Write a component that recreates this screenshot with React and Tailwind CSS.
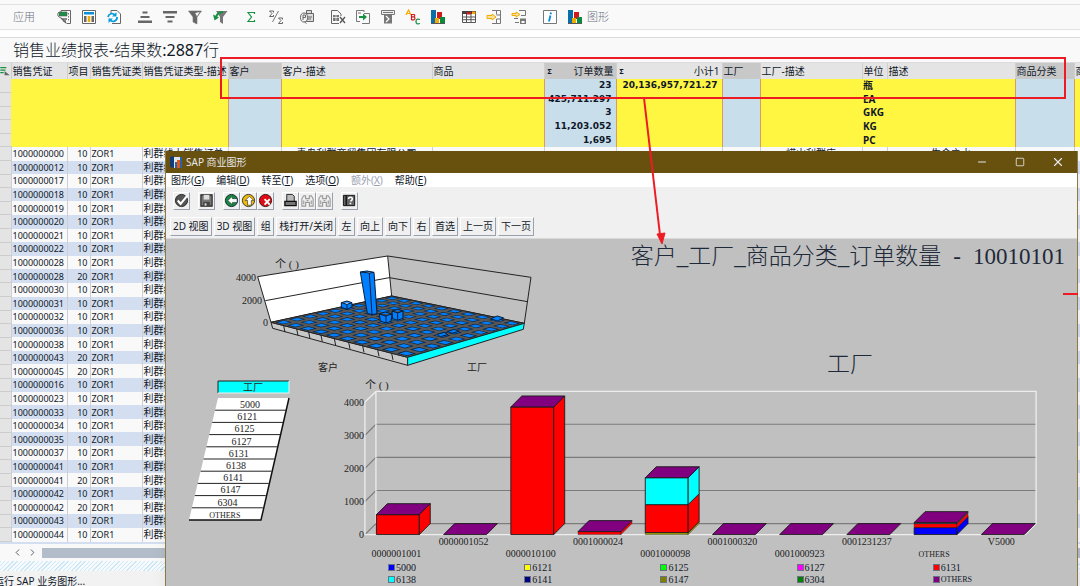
import { Minus, Square, X, ChevronLeft, ChevronRight } from 'lucide-react'

const SANS = "font-['Noto_Sans','Noto_Sans_CJK_SC',sans-serif]"
const SERIF = "font-['Liberation_Serif','Noto_Sans_CJK_SC',serif]"

const COLUMNS = [
  { label: '销售凭证', width: 56 },
  { label: '项目', width: 23 },
  { label: '销售凭证类', width: 52 },
  { label: '销售凭证类型-描述', width: 86 },
  { label: '客户', width: 53, marked: true },
  { label: '客户-描述', width: 151 },
  { label: '商品', width: 112 },
  { label: '订单数量', width: 72, marked: true, sum: true },
  { label: '小计1', width: 106, sum: true },
  { label: '工厂', width: 38, marked: true },
  { label: '工厂-描述', width: 102 },
  { label: '单位', width: 25 },
  { label: '描述', width: 128 },
  { label: '商品分类', width: 59, marked: true },
  { label: '商品分类描述' },
]

const TOTALS = [
  ['23', '20,136,957,721.27', '瓶'],
  ['425,711.297', '', 'EA'],
  ['3', '', 'GKG'],
  ['11,203.052', '', 'KG'],
  ['1,695', '', 'PC'],
]

const ROWS = [
  ['1000000000', 10], ['1000000012', 10], ['1000000017', 10], ['1000000018', 10],
  ['1000000019', 10], ['1000000020', 10], ['1000000021', 10], ['1000000022', 10],
  ['1000000028', 10], ['1000000028', 20], ['1000000030', 10], ['1000000031', 10],
  ['1000000032', 10], ['1000000036', 10], ['1000000038', 10], ['1000000043', 20],
  ['1000000045', 20], ['1000000016', 10], ['1000000023', 10], ['1000000033', 10],
  ['1000000034', 10], ['1000000035', 10], ['1000000037', 10], ['1000000041', 10],
  ['1000000041', 20], ['1000000042', 10], ['1000000042', 20], ['1000000043', 10],
  ['1000000044', 10],
]

// Descriptions of the first document, by column label
const FIRST_ROW = {
  '客户-描述': '青岛利群商贸集团有限公司',
  '工厂-描述': '崂山利群店',
  '描述': '生命之水',
}

const BarsIcon = (
  <>
    <path d="M1 1h5v14H1z" fill="#0a6ea8" />
    <path d="M7 3h5v7H7z" fill="#cf1b1b" />
    <path d="M5 9h4v6H5z" fill="#f0ab00" />
    <path d="M10 8h5v7h-5z" fill="#0a8a3c" />
    <path d="M1 14.5h14" stroke="#555" />
  </>
)

const TOOL_GROUPS = [
  [
    ['明细', <>
      <path d="M5 1.500h9.500v13h-4M5 1.500v2" stroke="#666" fill="none" />
      <path d="M3 3h8v4H3z" fill="#179244" stroke="#555" strokeWidth=".6" />
      <path d="M6 10h5M7 12h3M5 9l5 5" stroke="#666" strokeWidth="1.300" />
      <path d="M3 3a3 3 0 0 0 0 5l2 1" fill="none" stroke="#777" />
      <path d="M12.500 4v1.500M12.500 7v1.500M12.500 10v1.500" stroke="#777" />
    </>],
    ['选择布局', <>
      <path d="M1.500 1.500h13v13h-13z" fill="#fff" stroke="#666" />
      <path d="M3 3h10v2.500H3z" fill="#0a8fd6" />
      <path d="M3 7h2.500v6H3zM10.500 7H13v6h-2.500z" fill="#666" />
      <path d="M6.700 7h2.600v6H6.700z" fill="#f0ab00" />
    </>],
    ['刷新', <>
      <path d="M5 5V1.500h6l3.500 3.500v9.500H6" stroke="#666" fill="#fff" />
      <path d="M2 8a4 4 0 0 1 7-2M11 8a4 4 0 0 1-7 3" stroke="#0a9be0" strokeWidth="1.800" fill="none" />
      <path d="M10.500 3v4.500H6zM2.500 14V9.500H7z" fill="#0a9be0" />
    </>],
  ],
  [
    ['升序', <path d="M5.500 2.500h5v2h-5zM3.500 7h9v2h-9zM1 11.500h14v2.500H1z" fill="#666" />],
    ['降序', <path d="M1 2h14v2.500H1zM3.500 7h9v2h-9zM5.500 11.500h5v2h-5z" fill="#666" />],
    ['过滤', <path d="M1.500 2h13L10 8v7l-4-2V8zM8 4l2 4 3-5" fill="#666" stroke="#777" strokeWidth=".6" />],
    ['删除过滤', <>
      <path d="M4 2h11.500L11 8v7l-3-2V8z" fill="#777" />
      <path d="M11 3C8 3 5 5 4 8" stroke="#179244" strokeWidth="2.200" fill="none" />
      <path d="M1 5.500l1.500 6L7 8.500z" fill="#179244" />
    </>],
  ],
  [
    ['总计', <path d="M11.500 5V3.500H5l3.500 4.500L5 12.500h6.500V11" stroke="#179244" strokeWidth="1.200" fill="none" />],
    ['小计', <>
      <path d="M5.500 3.500V2h-4L4 4.500 1.500 7.500h4V6M14.500 10.500V9h-4l2.500 2.500-2.500 3h4V13" stroke="#666" fill="none" />
      <path d="M10.500 2L4.500 13" stroke="#777" />
    </>],
  ],
  [
    ['打印预览', <>
      <path d="M7.500 4V1.500h5V4M5.500 4.500h9v8h-9z" stroke="#666" fill="#ddd" />
      <path d="M7 8h6M8 10h4" stroke="#666" />
      <ellipse cx="5" cy="8.500" rx="3.500" ry="4.500" fill="#f5f5f5" stroke="#666" />
      <path d="M4 6v5M4 6h2.500v2.500H4M5.500 13l2 1.500" stroke="#666" fill="none" />
    </>],
  ],
  [
    ['电子表格', <>
      <path d="M9 14.500H1.500v-13h6L11 5v2" stroke="#666" fill="none" />
      <path d="M3 6h6v6H3z" fill="#777" />
      <path d="M3 8.500h6M6 6v6" stroke="#fff" strokeWidth=".7" />
      <path d="M10 8l5 6M15 8l-5 6" stroke="#555" strokeWidth="1.300" />
    </>],
    ['导出', <>
      <path d="M9 3V1.500H1.500v11H5M9 4.500h5.500v10H9M7 14.500h2" stroke="#777" fill="none" />
      <path d="M3 4h3" stroke="#777" />
      <path d="M4 7h4V4.500L12 8l-4 3.500V9H4z" fill="#179244" />
    </>],
    ['本地文件', <>
      <path d="M1.500 1.500h13v4h-13z" stroke="#777" fill="#eee" />
      <path d="M3 3.500h10" stroke="#777" />
      <path d="M4 5h8v9.500H4z" fill="#777" />
      <path d="M6 7l3 3-3 3" stroke="#fff" fill="none" strokeWidth="1.200" />
    </>],
    ['ABC 分析', <>
      <path d="M1 6l2.500-5L6 6M2 4.500h3" stroke="#f0ab00" fill="none" strokeWidth="1.200" />
      <path d="M6.500 5v6M6.500 5.500H9q1.500 1.200 0 2.300H7M9 7.800q2 1.600 0 3H6.500" stroke="#cf1b1b" fill="none" strokeWidth="1.200" />
      <path d="M15 10.500q-4-1.500-4 2t4 2" stroke="#179244" fill="none" strokeWidth="1.300" />
    </>],
    ['图形', BarsIcon],
  ],
  [
    ['更改布局', <>
      <path d="M1.500 2.500h13v11h-13z" fill="#fff" stroke="#555" />
      <path d="M1 2h14v3H1z" fill="#444" />
      <path d="M6 3h4v2.500H6z" fill="#cf1b1b" />
      <path d="M11 2.500h3.500V5H11z" fill="#f0ab00" />
      <path d="M1.500 8h13M1.500 10.700h13M5.500 5v8.500M10 5v8.500" stroke="#555" />
    </>],
    ['展开', <>
      <path d="M6 1.500h8.500v13H6M10.500 1.500v4M10.500 10v4.500M10.500 6h4M10.500 10h4" stroke="#777" fill="none" />
      <path d="M1 6.500h5V5l4 3-4 3V9.500H1z" fill="#fde3a0" stroke="#f0ab00" />
    </>],
    ['保存布局', <>
      <path d="M8 1.500h6.500v5H10M3 9.500h4M4 13.500h4" stroke="#777" fill="none" />
      <path d="M1 4.500h4V3l4 2.500L5 8V6.500H1z" fill="#fde3a0" stroke="#f0ab00" />
      <path d="M9 9.500h6v5.500H9z" fill="#777" />
      <path d="M10.500 12h3v2h-3z" fill="#fff" />
    </>],
  ],
  [
    ['信息', <>
      <path d="M1.500 1.500h13v13h-13z" fill="#fff" stroke="#777" />
      <path d="M9 3.500l-.4 1.800M8.400 6.500L7 12.500" stroke="#0a8fd6" strokeWidth="1.900" />
    </>],
  ],
]

const MENUS = [
  ['图形', 'G'], ['编辑', 'D'], ['转至', 'T'], ['选项', 'O'], ['额外', 'X', true], ['帮助', 'E'],
]

const Finder = (
  <path d="M2 14V6l2-3h2v3h4V3h2l2 3v8h-4v-4H6v4zM4 8v4M12 8v4M7 8h2" fill="none" stroke="#999" strokeWidth="1.200" />
)

const CHART_TOOLS = [
  [['确认', <>
    <circle cx="8" cy="8" r="6.500" fill="#555" stroke="#222" />
    <path d="M4 8l3 3.500L14 3" fill="none" stroke="#fff" strokeWidth="2.200" />
  </>]],
  [['保存', <>
    <path d="M2 2h12v12H2z" fill="#777" stroke="#222" strokeWidth="1.200" />
    <path d="M5 2h6v5H5z" fill="#ddd" />
    <path d="M4.500 9.500h7V14h-7z" fill="#444" />
    <path d="M6 11h2v2.500H6z" fill="#ddd" />
  </>]],
  [
    ['返回', <>
      <circle cx="8" cy="8" r="6.500" fill="#16893b" stroke="#123" />
      <path d="M4 8l5-4.500V6h5v4H9v2.500z" fill="#fff" stroke="#123" strokeWidth=".6" />
    </>],
    ['退出', <>
      <circle cx="8" cy="8" r="6.500" fill="#f2b90c" stroke="#332" />
      <path d="M9 3.500l4.500 4.500H11v5H7V8H4.500z" fill="#fff" stroke="#332" strokeWidth=".7" />
    </>],
    ['取消', <>
      <circle cx="8" cy="8" r="6.500" fill="#e00b14" stroke="#311" />
      <path d="M7 6.500l5.500 6M12.500 6.500l-5.500 6" stroke="#fff" strokeWidth="2" />
    </>],
  ],
  [
    ['打印', <>
      <path d="M4 1.500h6l2 2V9H4z" fill="#bbb" stroke="#222" />
      <path d="M2 9h12v4.500H2z" fill="#777" stroke="#111" strokeWidth="1.400" />
    </>],
    ['查找', Finder],
    ['查找下一个', Finder],
  ],
  [['帮助', <>
    <path d="M1.500 2.500h3v11h-3zM4.500 2.500h9v11h-9z" fill="#666" stroke="#111" />
    <path d="M7 6.500q0-2 2-2t2 2q0 1-2 2.500M9 10.500v1.500" fill="none" stroke="#fff" strokeWidth="1.700" />
  </>]],
]

const VIEW_BUTTONS = [
  '2D 视图', '3D 视图', '组', '栈打开/关闭', '左', '向上', '向下', '右', '首选', '上一页', '下一页',
]

const PLANTS = ['5000', '6121', '6125', '6127', '6131', '6138', '6141', '6147', '6304', 'OTHERS']

const LEGEND = [
  ['5000', '#0000ff'], ['6121', '#ffff00'], ['6125', '#00ff00'], ['6127', '#ff00ff'], ['6131', '#ff0000'],
  ['6138', '#00ffff'], ['6141', '#000080'], ['6147', '#808000'], ['6304', '#008000'], ['OTHERS', '#800080'],
]

// Stacked segments: [height, colour], drawn from the base up
const CUSTOMERS = [
  { name: '0000001001', stack: [[20, '#ff0000']] },
  { name: '0000001052', stack: [] },
  { name: '0000010100', stack: [[128, '#ff0000']] },
  { name: '0001000024', stack: [[3, '#ff0000']] },
  { name: '0001000098', stack: [[2, '#a0a000'], [28, '#ff0000'], [27, '#00ffff']] },
  { name: '0001000320', stack: [] },
  { name: '0001000923', stack: [] },
  { name: '0001231237', stack: [] },
  { name: 'OTHERS', stack: [[7, '#0000ff'], [4, '#ff0000'], [1, '#008080']] },
  { name: 'V5000', stack: [] },
]

function Glyph({ children, className = 'size-4' }) {
  return <svg viewBox="0 0 16 16" className={className} aria-hidden="true">{children}</svg>
}

function ReportToolbar() {
  return (
    <div className="flex h-[26px] items-center gap-[15px] border-y border-[#e2e2e2] bg-[#f9f9f9] pl-[13px] text-[11px] font-light text-gray-500">
      <button className="mr-1.5 whitespace-nowrap">应用</button>
      {TOOL_GROUPS.map((group, i) => (
        <div key={i} className="flex gap-[9px]">
          {group.map(([label, art]) => (
            <button key={label} aria-label={label}><Glyph>{art}</Glyph></button>
          ))}
          {i === TOOL_GROUPS.length - 1 && (
            <button className="flex items-center gap-1 whitespace-nowrap"><Glyph>{BarsIcon}</Glyph>图形</button>
          )}
        </div>
      ))}
    </div>
  )
}

function ReportTable() {
  return (
    <table className="h-[479px] w-full table-fixed border-collapse text-[9px] leading-[13px] text-gray-900">
      <colgroup>
        <col className="w-[11px]" />
        {COLUMNS.map((c) => <col key={c.label} style={{ width: c.width }} />)}
      </colgroup>
      <thead>
        <tr className="h-4 text-[10px]">
          <th className="bg-[#e4e4e4] p-0">
            <svg viewBox="0 0 11 14" className="h-3 w-2.5" aria-label="全选">
              <path d="M0 3h7M0 6h6M0 9h4" stroke="#179244" strokeWidth="1.500" />
              <path d="M5 7l6 5H5z" fill="#666" />
            </svg>
          </th>
          {COLUMNS.map((c) => (
            <th
              key={c.label}
              className={`overflow-hidden border-l border-[#cfcfcf] py-0 pr-0.5 pl-px font-normal whitespace-nowrap ${c.marked ? 'bg-[#c8c8c8]' : 'bg-[#e4e4e4]'}`}
            >
              <div className={`flex items-center ${c.sum ? 'justify-between' : ''}`}>
                {c.sum && <span className="pl-0.5 text-[7px] font-bold">Σ</span>}
                <span>{c.label}</span>
              </div>
            </th>
          ))}
        </tr>
      </thead>
      <tbody>
        {TOTALS.map(([qty, subtotal, unit]) => (
          <tr key={unit} className="font-bold">
            <td className="border-b border-[#cdcdcd] bg-[#e4e4e4] p-0" />
            {COLUMNS.map((c, i) => (
              <td
                key={c.label}
                className={`p-0 whitespace-nowrap ${c.marked ? 'border-x border-x-[#dd9a62] bg-[#c8dfeb]' : 'bg-[#fff642]'} ${c.sum ? "pr-1 text-right font-['DejaVu_Sans',sans-serif]" : 'pl-px text-[10px]'}`}
              >
                {i === 7 && qty}
                {i === 8 && subtotal}
                {i === 11 && unit}
              </td>
            ))}
          </tr>
        ))}
        {ROWS.map(([doc, item], r) => (
          <tr key={doc + item} className={r % 2 ? 'bg-[#d3dff0]' : 'bg-[#f9f9f9]'}>
            <td className="border-b border-[#cdcdcd] bg-[#e4e4e4] p-0" />
            <td className="border-l border-[#ccd0d6] p-0 pl-px">{doc}</td>
            <td className="border-l border-[#ccd0d6] p-0 pr-0.5 text-right">{item}</td>
            <td className="border-l border-[#ccd0d6] p-0 pl-px">ZOR1</td>
            <td className="overflow-hidden border-l border-[#ccd0d6] p-0 pl-px text-[10px] whitespace-nowrap">
              {r === 0 ? '利群线上销售订单' : '利群线'}
            </td>
            {COLUMNS.slice(4).map((c) => (
              <td key={c.label} className="overflow-hidden border-l border-[#ccd0d6] p-0 text-center text-[10px] whitespace-nowrap">
                {r === 0 && FIRST_ROW[c.label]}
              </td>
            ))}
          </tr>
        ))}
      </tbody>
    </table>
  )
}

const FLOOR = { left: [150, 247], back: [512, 168], right: [910, 250], front: [560, 352] }

function floorPoint(u, v) {
  const s = 0.85 * u + 0.15 * u * u
  const t = 1.15 * v - 0.15 * v * v
  return [0, 1].map((k) =>
    (1 - s) * (1 - t) * FLOOR.left[k] + s * (1 - t) * FLOOR.front[k] +
    (1 - s) * t * FLOOR.back[k] + s * t * FLOOR.right[k],
  )
}

function tile(u, v, r) {
  return [[-r, -r], [r, -r], [r, r], [-r, r]].map(([a, b]) => floorPoint(u + a, v + b).join(',')).join(' ')
}

function OverviewChart() {
  const cells = Array.from({ length: 100 }, (_, i) => [(i % 10) / 10 + 0.05, Math.floor(i / 10) / 10 + 0.05])
  return (
    <svg viewBox="165 239 385 140" className={`w-[385px] shrink-0 ${SERIF}`} role="img" aria-label="客户 工厂">
      <g transform="translate(220 240) scale(.3333)" stroke="#222" strokeWidth="3">
        <path d="M110 110L500 48L512 168L150 247z" fill="#fff" />
        <path d="M500 48L930 112L910 250L512 168M133 182L505 113L920 185" fill="none" />
        <path d="M150 247L155 265L560 376V352z" fill="#c8c8c8" />
        {[188, 227, 263, 300, 340, 383, 425, 470, 512].map((x) => (
          <path key={x} d={`M${x} ${247 + (x - 150) * 0.256}l4 20`} />
        ))}
        <path d="M150 247L512 168L910 250L560 352z" fill="#585858" />
        {cells.map(([u, v]) => (
          <g key={`${u}-${v}`} stroke="none">
            <polygon points={tile(u, v, 0.034)} fill="#10233a" />
            <polygon points={tile(u, v, 0.024)} fill="#0080ff" />
          </g>
        ))}
        <path d="M560 352L910 250L907 268L560 376z" fill="#00ffff" />
        <g fill="#0080ff" stroke="#031c3c">
          <path d="M361 188l17-5 15 5v13l-15 7-17-6zM361 188l17 5 15-5M378 193v15" />
          <path d="M418 96l20-3 21 4 9 124-15 3-14-4zM418 96l27 3 14-2M445 99l8 125" />
          <path d="M475 222l18-6 20 6-3 22-15 5-17-6zM475 222l18 6 20-6M495 228v21" />
          <path d="M513 213l17-5 16 5v22l-16 6-15-5zM513 213l17 6 16-6M530 219v22" />
          <path d="M809 236l20-8 19 6-19 9zM648 283l22-6 10 7-22 6zM680 274l20-6 14 6-21 6z" />
        </g>
      </g>
      <g fontSize="10" fill="#222">
        <text x="274" y="268" fontSize="11">个 ( )</text>
        <g textAnchor="end">
          <text x="255" y="281">4000</text>
          <text x="261" y="304">2000</text>
          <text x="267" y="326">0</text>
        </g>
        <text x="317" y="371">客户</text>
        <text x="466" y="371">工厂</text>
      </g>
    </svg>
  )
}

function PlantList() {
  return (
    <svg viewBox="165 379 175 207" className={`w-[175px] shrink-0 self-start ${SERIF}`} role="img" aria-label="工厂列表">
      <path d="M217 381h71v12h-71z" fill="#00ffff" />
      <path d="M217 393v-12h71" fill="none" stroke="#222" />
      <path d="M217 393h71v-12" fill="none" stroke="#eee" />
      <text x="252" y="391" fontSize="10" textAnchor="middle" fill="#222">工厂</text>
      <path d="M217 398h71L260 520h-72z" fill="#fff" />
      <path d="M288 398L260 520H188" fill="none" stroke="#111" strokeWidth="1.500" />
      {PLANTS.map((plant, i) => (
        <g key={plant}>
          {i > 0 && <path d={`M${217 - i * 2.9} ${398 + i * 12.2}h71`} stroke="#222" />}
          <text
            x={249 - i * 2.8}
            y={408 + i * 12.2}
            fontSize={plant === 'OTHERS' ? 8 : 10}
            textAnchor="middle"
            fill="#222"
          >
            {plant}
          </text>
        </g>
      ))}
    </svg>
  )
}

function StackedBar({ x, stack }) {
  let base = 535
  const parts = stack.map(([h, color], i) => {
    base -= h
    return (
      <g key={i} fill={color} strokeWidth={h < 5 ? 0.4 : 0.9}>
        <path d={`M${x} ${base}h43v${h}h-43z`} />
        <path d={`M${x + 43} ${base}l11 -11v${h}l-11 11z`} />
      </g>
    )
  })
  return (
    <g stroke="#1a1a1a" strokeWidth=".9" strokeLinejoin="round">
      {parts}
      <path d={`M${x} ${base}l11 -11h43l-11 11z`} fill="#800080" />
    </g>
  )
}

function CustomerChart() {
  return (
    <svg viewBox="340 379 738 183" className={`w-full ${SERIF}`} role="img" aria-label="订单数量">
      <g fill="none">
        {[0, 1, 2, 3].map((n) => (
          <path key={n} d={`M364 ${535 - n * 33.2}l11 -11H1037`} stroke="#7c7c7c" strokeWidth="1.200" />
        ))}
        <path d="M364 402V535H1026L1037 524V391.500H375L364 402M375 391.500V524" stroke="#ededed" strokeWidth="1.300" />
      </g>
      {CUSTOMERS.map((c, i) => <StackedBar key={c.name} x={375.5 + i * 67.4} stack={c.stack} />)}
      <g fontSize="10" fill="#222">
        <text x="364" y="389" fontSize="11">个 ( )</text>
        {[0, 1000, 2000, 3000, 4000].map((v, n) => (
          <text key={v} x="363" y={538 - n * 33} textAnchor="end">{v}</text>
        ))}
        {CUSTOMERS.map((c, i) => (
          <text
            key={c.name}
            x={395.5 + i * 67.4}
            y={i % 2 ? 545 : 557}
            fontSize={c.name === 'OTHERS' ? 8 : 10}
            textAnchor="middle"
          >
            {c.name}
          </text>
        ))}
      </g>
    </svg>
  )
}

function ChartWindow() {
  return (
    <section className="absolute top-[151px] right-0.5 bottom-0 left-[165px] flex flex-col border-x border-[#8a7a4a] bg-[#f0f0f0] shadow-lg">
      <header className="flex h-[22px] shrink-0 items-center bg-[#68500f] pl-1 text-[10px] text-gray-200">
        <svg viewBox="0 0 12 12" className="mr-1 size-3" aria-hidden="true">
          <path d="M0 1l4-1v12l-4-1z" fill="#123c78" />
          <path d="M4 1h8v11H4z" fill="#dce6ee" />
          <path d="M5 6h2v6H5zM10 1h2v11h-2z" fill="#2a62a8" />
          <path d="M7 4h3v8H7z" fill="#e0561b" />
        </svg>
        <h1 className="grow">SAP 商业图形</h1>
        <button aria-label="最小化" className="flex w-[38px] justify-center"><Minus size={12} strokeWidth={2} /></button>
        <button aria-label="最大化" className="flex w-[38px] justify-center"><Square size={10} strokeWidth={2} /></button>
        <button aria-label="关闭" className="flex w-[38px] justify-center"><X size={14} strokeWidth={2} /></button>
      </header>

      <nav className="flex h-[14px] shrink-0 items-center gap-[12px] bg-white pl-[5px] text-[10px] leading-[14px] text-gray-900">
        {MENUS.map(([label, key, disabled]) => (
          <button key={key} disabled={disabled} className="disabled:text-gray-400">
            {label}(<u>{key}</u>)
          </button>
        ))}
      </nav>

      <div className="flex h-[27px] shrink-0 items-center gap-2 pl-[7px]">
        {CHART_TOOLS.map((group, i) => (
          <div key={i} className="flex">
            {group.map(([label, art]) => (
              <button
                key={label}
                aria-label={label}
                className="flex h-[18px] w-[17px] items-center justify-center border border-t-white border-r-gray-400 border-b-gray-400 border-l-white"
              >
                <Glyph className="size-[15px]">{art}</Glyph>
              </button>
            ))}
          </div>
        ))}
      </div>

      <div className="flex h-[25px] shrink-0 items-center gap-0.5 border-b border-[#d8d8d8] pl-1">
        {VIEW_BUTTONS.map((label) => (
          <button
            key={label}
            className="h-[19px] min-w-[17px] border border-t-white border-r-gray-400 border-b-gray-400 border-l-white px-[2px] text-center text-[10px] whitespace-nowrap text-gray-900"
          >
            {label}
          </button>
        ))}
      </div>

      <div className="flex grow flex-col bg-[#c0c0c0]">
        <div className="flex">
          <OverviewChart />
          <div className={`flex grow flex-col justify-between text-[23px] leading-7 font-light text-gray-800 ${SERIF}`}>
            <h2 className="flex justify-end gap-3 pt-1 pr-3 whitespace-nowrap">
              <span>客户_工厂_商品分类_订单数量</span>
              <span>-</span>
              <span>10010101</span>
            </h2>
            <h3 className="pl-[72px] text-center">工厂</h3>
          </div>
        </div>
        <div className="flex">
          <PlantList />
          <div className="grow">
            <CustomerChart />
            <ul className={`grid grid-cols-5 pr-2 pl-[47px] text-[10px] leading-3 text-gray-900 ${SERIF}`}>
              {LEGEND.map(([name, color]) => (
                <li key={name} className="flex items-center gap-px">
                  <span className="size-[7px] border border-gray-500" style={{ background: color }} />
                  <span className={name === 'OTHERS' ? 'text-[8px]' : ''}>{name}</span>
                </li>
              ))}
            </ul>
          </div>
        </div>
      </div>
    </section>
  )
}

function Annotations() {
  return (
    <div className="pointer-events-none absolute inset-0">
      <div className="absolute top-[57px] right-[14px] left-[220px] h-[42px] border-2 border-[#ed1c24]" />
      <svg viewBox="0 0 30 150" className="absolute top-[97px] left-[640px] h-[150px] w-[30px]" aria-hidden="true">
        <path d="M4 1L20 138" stroke="#ed1c24" strokeWidth="2" />
        <path d="M17 137l8-1-3 11z" fill="#ed1c24" stroke="#ed1c24" />
      </svg>
      <div className="absolute top-[293px] right-0.5 h-0.5 w-[15px] bg-[#ed1c24]" />
    </div>
  )
}

export default function App() {
  return (
    <div className={`relative flex min-h-screen flex-col overflow-hidden bg-white ${SANS}`}>
      <div className="h-1 bg-[#f9f9f9]" />
      <ReportToolbar />
      <div className="mt-[7px] flex h-[26px] items-end border-y border-[#dcdcdc] bg-[#f9f9f9] pl-[13px]">
        <p className="text-base leading-6 font-light whitespace-nowrap text-gray-900">
          销售业绩报表<span className="font-normal">-</span>结果数<span className="font-normal">:2887</span>行
        </p>
      </div>
      <ReportTable />
      <div className="flex h-[19px] items-center gap-1 border-t-2 border-[#d3dff0] bg-[#f9f9f9] pl-3 text-gray-600">
        <button aria-label="向左滚动"><ChevronLeft size={11} /></button>
        <button aria-label="向右滚动"><ChevronRight size={11} /></button>
        <div className="h-2.5 grow bg-[#b3bdc9]" />
      </div>
      <div className="h-2.5 bg-[repeating-linear-gradient(135deg,#cfe6f3_0px,#cfe6f3_1px,#f4fafd_1px,#f4fafd_3px)]" />
      <footer className="h-[15px] bg-[#f2f2f2]">
        <p className="-ml-1.5 pt-0.5 text-[10px] leading-4 text-gray-900">运行 SAP 业务图形...</p>
      </footer>
      <ChartWindow />
      <Annotations />
    </div>
  )
}
